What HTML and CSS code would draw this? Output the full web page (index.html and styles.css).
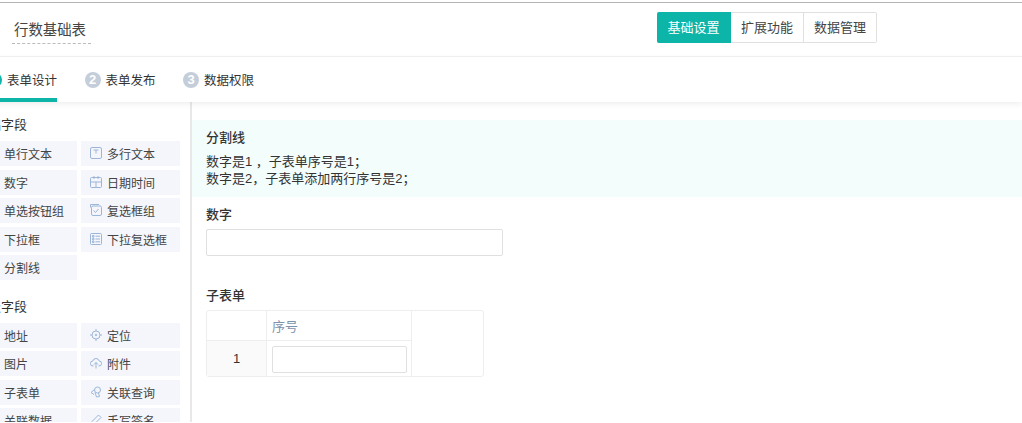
FILE: index.html
```html
<!DOCTYPE html>
<html lang="zh">
<head>
<meta charset="utf-8">
<title>行数基础表</title>
<link rel="stylesheet" href="styles.css">
</head>
<body>
<div class="page">
  <header class="header">
    <div class="title">行数基础表</div>
    <nav class="switch">
      <span class="switch-item active">基础设置</span>
      <span class="switch-item">扩展功能</span>
      <span class="switch-item">数据管理</span>
    </nav>
  </header>
  <div class="tabs">
    <div class="tab current"><span class="num">1</span><span>表单设计</span></div>
    <div class="tab"><span class="num">2</span><span>表单发布</span></div>
    <div class="tab"><span class="num">3</span><span>数据权限</span></div>
  </div>
  <div class="main">
    <aside class="side">
      <h4 class="side-title">基础字段</h4>
      <div class="fields">
        <div class="field"><span>单行文本</span></div>
        <div class="field"><svg class="ico" viewBox="0 0 12 12"><rect x=".5" y=".5" width="11" height="11" rx="1.5"/><path d="M3.500 3h5M6 3v3.500"/></svg><span>多行文本</span></div>
        <div class="field"><span>数字</span></div>
        <div class="field"><svg class="ico" viewBox="0 0 12 12"><rect x=".5" y="1.500" width="11" height="10" rx="1"/><path d="M.5 6h11M4 0v3M8 0v3M6 6v5.500"/></svg><span>日期时间</span></div>
        <div class="field"><span>单选按钮组</span></div>
        <div class="field"><svg class="ico" viewBox="0 0 12 12"><path d="M.5 3.500V.5h8.500"/><rect x="1.500" y="2" width="10" height="9.500" rx="1.500"/><path d="M3.500 6.500l2 2 3-3.500"/></svg><span>复选框组</span></div>
        <div class="field"><span>下拉框</span></div>
        <div class="field"><svg class="ico" viewBox="0 0 12 12"><rect x=".5" y=".5" width="11" height="11" rx="1"/><path d="M2.500 2.500h1.500v1.500h-1.500zM2.500 5.300h1.500v1.500h-1.500zM2.500 8h1.500v1.500h-1.500zM5.500 3.200h4.500M5.500 6h4.500M5.500 8.800h4.500"/></svg><span>下拉复选框</span></div>
        <div class="field"><span>分割线</span></div>
      </div>
      <h4 class="side-title second">高级字段</h4>
      <div class="fields">
        <div class="field"><span>地址</span></div>
        <div class="field"><svg class="ico" viewBox="0 0 12 12"><circle cx="6" cy="6" r="4"/><circle cx="6" cy="6" r=".8"/><path d="M6 0v2M6 10v2M0 6h2M10 6h2"/></svg><span>定位</span></div>
        <div class="field"><span>图片</span></div>
        <div class="field"><svg class="ico" viewBox="0 0 12 12"><path d="M3.500 9H3A2.500 2.500 0 0 1 2.800 4 3.300 3.300 0 0 1 9.200 4 2.500 2.500 0 0 1 9 9h-.5M6 11.500V5.500M4 7.500l2-2 2 2"/></svg><span>附件</span></div>
        <div class="field"><span>子表单</span></div>
        <div class="field"><svg class="ico" viewBox="0 0 12 12"><circle cx="7.500" cy="4" r="3"/><path d="M4.500 3.500L1 6.500l3 2M5 6.500l1.500 4.500 3-.5-1-3.500"/></svg><span>关联查询</span></div>
        <div class="field"><span>关联数据</span></div>
        <div class="field"><svg class="ico" viewBox="0 0 12 12"><path d="M1.500 10.500l.5-3L8.500 1l2.500 2.500L4.500 10z"/></svg><span>手写签名</span></div>
      </div>
    </aside>
    <section class="canvas">
      <div class="note">
        <div class="note-title">分割线</div>
        <div class="note-line">数字是1 ，子表单序号是1；</div>
        <div class="note-line">数字是2，子表单添加两行序号是2；</div>
      </div>
      <div class="form-item">
        <label class="label">数字</label>
        <div class="input wide"></div>
      </div>
      <div class="form-item sub">
        <label class="label">子表单</label>
        <div class="subform">
          <div class="sub-index">
            <div class="cell-head"></div>
            <div class="cell-num">1</div>
          </div>
          <div class="sub-col">
            <div class="col-head">序号</div>
            <div class="col-body"><div class="input"></div></div>
          </div>
          <div class="sub-rest"></div>
        </div>
      </div>
    </section>
  </div>
</div>
</body>
</html>
```

FILE: styles.css
```css
* { box-sizing: border-box; }
html, body { margin: 0; padding: 0; height: 100%; overflow: hidden; background: #fff; }
body { font-family: "Liberation Sans", "Noto Sans CJK SC", sans-serif; font-size: 12px; color: #333; }
.page { height: 423px; padding-top: 2px; overflow: hidden; }
.header { height: 55px; border-top: 1px solid #b5b5b5; border-bottom: 1px solid #f2f2f2; display: flex; align-items: flex-start; padding-left: 12px; }
.title { width: 79px; height: 41px; padding: 16px 0 0 2px; line-height: 22px; font-size: 14.400px; border-bottom: 1px dashed #bbb; color: #444; white-space: nowrap; }
.switch { display: flex; margin: 9px 0 0 566px; height: 31px; }
.switch-item { width: 73px; border: 1px solid #e0e0e0; border-left: 0; line-height: 29px; text-align: center; font-size: 13px; color: #444; }
.switch-item:last-child { border-radius: 0 2px 2px 0; }
.switch-item.active { width: 74px; background: #0cb5a8; border-color: #0cb5a8; color: #fff; border-radius: 2px 0 0 2px; }
.tabs { height: 45px; display: flex; margin-left: -14px; box-shadow: 0 2px 6px rgba(0,0,0,.07); position: relative; gap: 27.500px; }
.tab { display: flex; align-items: center; gap: 5px; height: 45px; font-size: 12.500px; color: #333; }
.tab.current { border-bottom: 4px solid #0cb5a8; padding-top: 4px; }
.num { width: 16px; height: 16px; border-radius: 50%; background: #c4cdda; color: #fff; font-size: 13px; font-weight: 700; line-height: 16px; text-align: center; }
.tab.current .num { background: #0cb5a8; }
.main { display: flex; height: 320px; }
.side { width: 192px; flex: none; border-right: 2px solid #e8e8e8; overflow: hidden; padding-top: 14px; }
.side-title { margin: 0 0 8px -25px; font-size: 13px; font-weight: 400; line-height: 17px; color: #333; }
.side-title.second { margin-top: 17.500px; margin-bottom: 8px; }
.fields { display: grid; grid-template-columns: 99px 99px; column-gap: 4px; row-gap: 3.500px; margin-left: -22px; }
.field { height: 25px; background: #f4f6fb; display: flex; align-items: center; padding-left: 26px; font-size: 12px; color: #444; position: relative; }
.ico { position: absolute; left: 9px; top: 6px; width: 12px; height: 12px; fill: none; stroke: #9db6d8; stroke-width: 1; }
.canvas { flex: 1; padding-top: 18px; min-width: 0; }
.note { height: 77px; background: #f3fdfc; padding: 9px 14px; font-size: 13px; color: #333; }
.note-title { font-weight: 500; font-size: 13px; margin-bottom: 7px; line-height: 17px; color: #333; }
.note-line { line-height: 17px; }
.form-item { padding: 9px 14px 0; }
.form-item.sub { padding-top: 31px; }
.label { display: block; font-weight: 500; font-size: 13px; line-height: 17px; color: #333; margin-bottom: 6px; }
.input { height: 27px; border: 1px solid #e0e0e0; border-radius: 2px; background: #fff; }
.input.wide { width: 297px; }
.subform { width: 278px; height: 67px; border: 1px solid #eee; border-radius: 3px; display: flex; }
.sub-index { width: 60px; border-right: 1px solid #eee; }
.cell-head { height: 30px; border-bottom: 1px solid #eee; }
.cell-num { height: 35px; background: #fafafa; text-align: center; line-height: 35px; font-size: 13px; color: #333; }
.sub-col { width: 145px; border-right: 1px solid #eee; }
.col-head { height: 30px; border-bottom: 1px solid #eee; line-height: 31px; padding-left: 5px; font-size: 13px; color: #7f93ad; }
.col-body { padding: 5px 4px 5px 5px; }
.sub-rest { flex: 1; }
```
